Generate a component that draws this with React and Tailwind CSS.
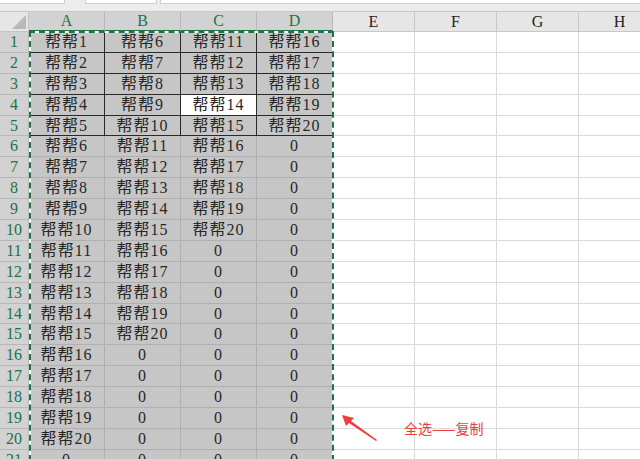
const COLS = ["A", "B", "C", "D", "E", "F", "G", "H"];
const ROWS = Array.from({ length: 21 }, (_, i) => i + 1);

function cellValue(col, row) {
  if (col > 3) return "";
  const n = row + col * 5;
  return n <= 20 ? `帮帮${n}` : "0";
}

function Cell({ col, row }) {
  const inSel = col <= 3;
  const boxed = inSel && row <= 5;
  const active = col === 2 && row === 4;
  const bg = active ? "bg-white" : inSel ? "bg-[#c6c6c6]" : "bg-white";
  const border = boxed
    ? "border-r border-b border-[#2a2a2a]"
    : inSel
    ? "border-r border-b border-[#b0b0b0]"
    : "border-r border-b border-[#dadada]";
  return (
    <div className={`flex items-center justify-center text-[16px] tracking-[1px] text-[#262626] leading-none ${bg} ${border}`}>
      {cellValue(col, row)}
    </div>
  );
}

export default function App() {
  return (
    <div
      className="relative w-[640px] h-[459px] overflow-hidden bg-white"
      style={{ fontFamily: '"Liberation Serif", "Noto Sans CJK SC", serif' }}
    >
      {/* top strip */}
      <div className="h-[12px] bg-[#ececec] border-b border-[#c8c8c8] flex gap-[20px] items-start">
        <div className="w-[68px] h-[4px] bg-white border-r border-b border-[#cfcfcf]" />
        <div className="flex gap-[3px]">
          <div className="w-[72px] h-[4px] bg-white border-x border-b border-[#cfcfcf]" />
          <div className="w-[480px] h-[4px] bg-white border-l border-b border-[#cfcfcf]" />
        </div>
      </div>

      {/* sheet */}
      <div className="grid grid-cols-[29px_76px_76px_76px_76px_82px_82px_82px_82px] grid-rows-[20px] auto-rows-[20.9px]">
        {/* corner */}
        <div className="relative bg-[#e6e6e6] border-r border-b border-[#c4c4c4]">
          <div className="absolute right-[2px] bottom-[2px] w-0 h-0 border-l-[14px] border-l-transparent border-b-[14px] border-b-[#b9b9b9]" />
        </div>
        {COLS.map((c, i) => (
          <div
            key={c}
            className={
              i <= 3
                ? "flex items-center justify-center bg-[#d2d2d2] text-[#217346] text-[16px] border-r border-[#b8b8b8] border-b-2 border-b-[#217346]"
                : "flex items-center justify-center bg-[#e6e6e6] text-[#222] text-[16px] border-r border-b border-[#c8c8c8]"
            }
          >
            {c}
          </div>
        ))}

        {ROWS.map((r) => (
          <div key={r} className="contents">
            <div className="flex items-center justify-center bg-[#d2d2d2] text-[#217346] text-[16px] border-r border-b border-[#b8b8b8]">
              {r}
            </div>
            {COLS.map((c, i) => (
              <Cell key={c} col={i} row={r} />
            ))}
          </div>
        ))}
      </div>

      {/* marching ants around the copied range */}
      <div className="absolute left-[29px] top-[31px] w-[305px] h-[440px] border-2 border-white pointer-events-none" />
      <div className="absolute left-[29px] top-[31px] w-[305px] h-[440px] border-2 border-dashed border-[#217346] pointer-events-none" />

      {/* annotation */}
      <svg className="absolute left-[338px] top-[410px]" width="44" height="34" viewBox="0 0 44 34">
        <path d="M4 5 L16 8 L13 11 L39 30 L38 31 L11 13 L8 16 Z" fill="#f23c3c" />
      </svg>
      <div
        className="absolute left-[404px] top-[421px] text-[14px] text-[#f23c3c] leading-none"
        style={{ fontFamily: '"Noto Sans CJK SC", sans-serif' }}
      >
        全选——复制
      </div>
    </div>
  );
}
